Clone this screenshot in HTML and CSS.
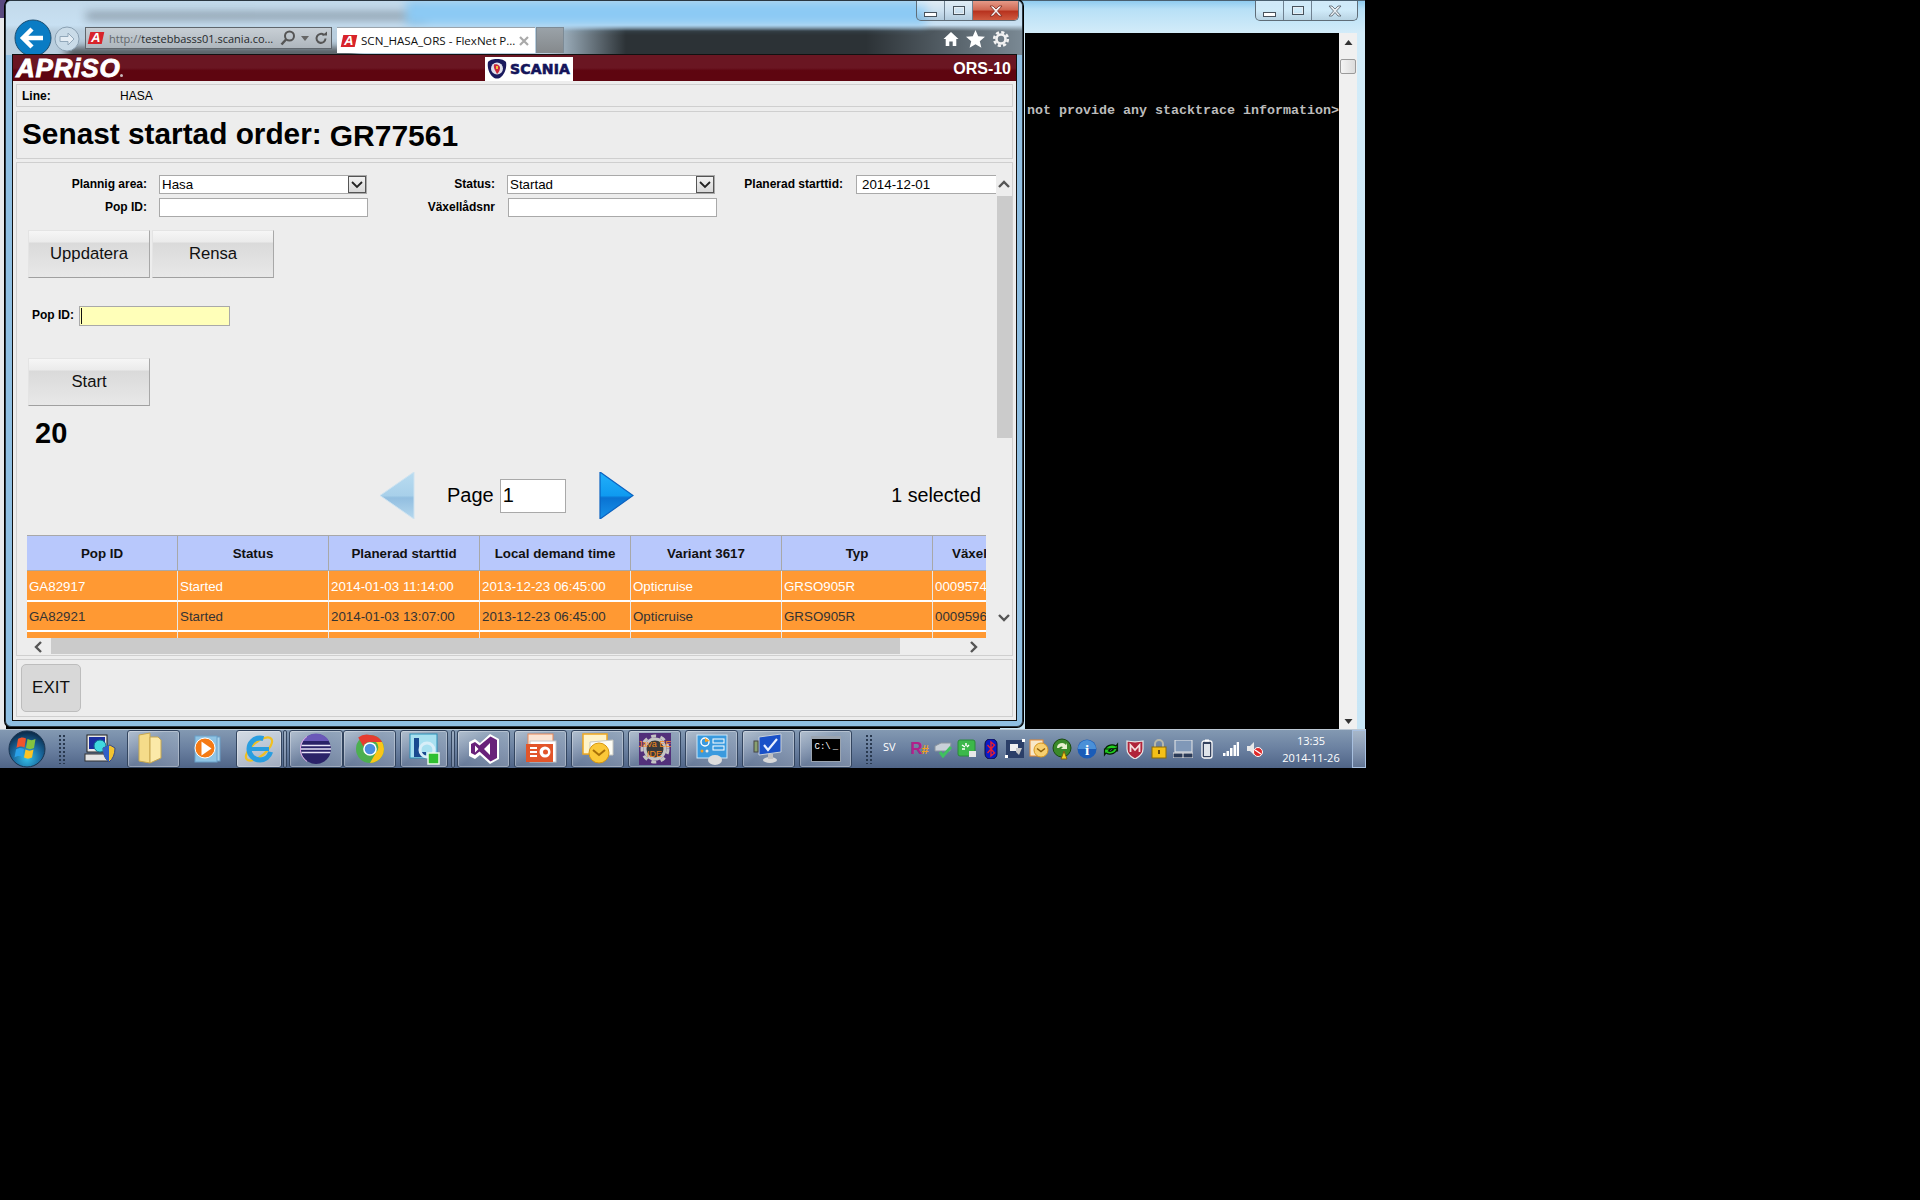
FILE: index.html
```html
<!DOCTYPE html>
<html>
<head>
  <title>SCN_HASA_ORS - FlexNet Production</title>
  <meta name="viewport" content="width=device-width, initial-scale=1.0">
  <link rel="stylesheet" href="styles.css">
</head>
<body>

  <div class="desktop">

    <div class="behind"><div class="behind-chip"></div></div>

    <!-- Console window -->
    <div class="console">
      <div class="win-buttons console-buttons">
        <div class="wb wb-min"><i class="glyph-min"></i></div>
        <div class="wb wb-max"><i class="glyph-max"></i></div>
        <div class="wb wb-x">
          <svg width="16" height="12" viewBox="0 0 16 12"><path d="M2 1h3l3 3 3-3h3l-4.500 5 4.500 5h-3l-3-3.500-3 3.500h-3l4.500-5z" fill="#e8eef2" stroke="#56606a" stroke-width=".8"/></svg>
        </div>
      </div>
      <div class="console-body">
        <div class="console-screen">
          <div class="console-line">not provide any stacktrace information&gt;</div>
        </div>
        <div class="console-scroll">
          <svg class="console-up" width="9" height="5" viewBox="0 0 9 5"><path d="M4.500 0l4 5h-8z" fill="#333"/></svg>
          <div class="console-thumb"></div>
          <svg class="console-down" width="9" height="5" viewBox="0 0 9 5"><path d="M4.500 5l4-5h-8z" fill="#333"/></svg>
        </div>
      </div>
    </div>

    <!-- Browser window -->
    <div class="browser">
      <div class="glass">
        <div class="smudge smudge-a"></div>
        <div class="smudge smudge-b"></div>
        <div class="smudge smudge-c"></div>

        <div class="win-buttons">
          <div class="wb wb-min"><i class="glyph-min"></i></div>
          <div class="wb wb-max"><i class="glyph-max"></i></div>
          <div class="wb wb-close">
            <svg width="16" height="12" viewBox="0 0 16 12"><path d="M2 1h3l3 3 3-3h3l-4.500 5 4.500 5h-3l-3-3.500-3 3.500h-3l4.500-5z" fill="#f4eeee" stroke="#7a2a20" stroke-width=".8"/></svg>
          </div>
        </div>

        <div class="navbar">
          <div class="nav-back">
            <svg width="38" height="38" viewBox="0 0 38 38">
              <circle cx="19" cy="19" r="18" fill="#0a7cc4" stroke="#1d4f72" stroke-width="1"/>
              <path d="M9 19h20M18 10l-9 9 9 9" fill="none" stroke="#fff" stroke-width="4.500"/>
            </svg>
          </div>
          <div class="nav-forward">
            <svg width="26" height="26" viewBox="0 0 26 26">
              <circle cx="13" cy="13" r="12" fill="#c9dbe8" stroke="#8aa0b2" stroke-width="1"/>
              <path d="M20 13l-6-6v3.500h-8v5h8v3.500z" fill="#e4edf4" stroke="#92a8ba" stroke-width="1"/>
            </svg>
          </div>
          <div class="address">
            <span class="favicon">A</span>
            <span class="url"><span class="url-scheme">http://</span>testebbasss01.scania.co...</span>
            <svg class="addr-icon" width="16" height="16" viewBox="0 0 16 16"><circle cx="9.500" cy="6" r="4.500" fill="none" stroke="#555" stroke-width="2"/><path d="M6 9.500l-4.500 5" stroke="#555" stroke-width="2.500"/></svg>
            <svg class="addr-drop" width="8" height="5" viewBox="0 0 8 5"><path d="M0 0h8l-4 5z" fill="#666"/></svg>
            <svg class="addr-icon" width="14" height="14" viewBox="0 0 14 14"><path d="M11.500 7.500a4.500 4.500 0 1 1-1.500-3.500" fill="none" stroke="#555" stroke-width="2"/><path d="M8 4.500h5v-4z" fill="#555"/></svg>
          </div>
          <div class="tab">
            <span class="favicon">A</span>
            <span class="tab-title">SCN_HASA_ORS - FlexNet P...</span>
            <svg class="tab-close" width="10" height="10" viewBox="0 0 10 10"><path d="M1 1l8 8M9 1l-8 8" stroke="#a9a9a9" stroke-width="2.200"/></svg>
          </div>
          <div class="tab-new"></div>
          <div class="tools">
            <svg width="16" height="16" viewBox="0 0 16 16"><path d="M8 1l7.500 7h-2.200v7h-3.600v-4.500h-3.400v4.500h-3.600v-7h-2.200z" fill="#fff"/></svg>
            <svg width="19" height="18" viewBox="0 0 19 18"><path d="M9.500 0l2.700 6.200 6.800.6-5.200 4.400 1.600 6.600-5.900-3.500-5.900 3.500 1.600-6.600-5.200-4.400 6.800-.6z" fill="#fff"/></svg>
            <svg width="18" height="18" viewBox="0 0 18 18"><circle cx="9" cy="9" r="4.500" fill="none" stroke="#f2f2f2" stroke-width="2.600"/><circle cx="9" cy="9" r="6.800" fill="none" stroke="#f2f2f2" stroke-width="2.600" stroke-dasharray="3.200 2.140"/></svg>
          </div>
        </div>
      </div>

      <div class="page">
        <div class="app-header">
          <div class="apriso">APRiSO<i class="apriso-mark"></i></div>
          <div class="scania">
            <svg width="20" height="20" viewBox="0 0 20 20">
              <path d="M1 3c2-2 4-3 9-3s7 1 9 3c1 5-1 12-5 15-2 2-6 2-8 0-4-3-6-10-5-15z" fill="#1a1a5e"/>
              <circle cx="10" cy="9.500" r="6" fill="#dfe0ec"/>
              <path d="M7 5.500c3-1 6.500 1 6 4s-1.500 4-3 5.500c-1-2.500-4-6-3-9.500z" fill="#c9283a"/>
              <path d="M9 7h2v3h-2z" fill="#f2c040"/>
            </svg>
            <span class="scania-name">SCANIA</span>
          </div>
          <div class="station">ORS-10</div>
        </div>

        <div class="panel line-panel">
          <span class="line-label">Line:</span>
          <span>HASA</span>
        </div>

        <div class="panel title-panel">
          <h1>Senast startad order:</h1>
          <div class="order-no">GR77561</div>
        </div>

        <div class="panel form-panel">
          <div class="form-content">
            <div class="filters">
              <label>Plannig area:</label>
              <div class="combo"><span>Hasa</span><i class="combo-arrow"><svg width="12" height="8" viewBox="0 0 12 8"><path d="M1 1l5 5 5-5" fill="none" stroke="#222" stroke-width="1.800"/></svg></i></div>
              <label>Status:</label>
              <div class="combo"><span>Startad</span><i class="combo-arrow"><svg width="12" height="8" viewBox="0 0 12 8"><path d="M1 1l5 5 5-5" fill="none" stroke="#222" stroke-width="1.800"/></svg></i></div>
              <label>Planerad starttid:</label>
              <input class="field field-date" type="text" value="2014-12-01">
              <label>Pop ID:</label>
              <input class="field field-long" type="text">
              <label>Växellådsnr</label>
              <input class="field field-long field-shift" type="text">
            </div>

            <div class="button-row">
              <button class="big-btn">Uppdatera</button>
              <button class="big-btn">Rensa</button>
            </div>

            <div class="scan-row">
              <label>Pop ID:</label>
              <div class="scan-input"><i class="caret"></i></div>
            </div>

            <button class="big-btn start-btn">Start</button>
            <div class="count">20</div>

            <div class="pager">
              <svg class="pager-prev" width="35" height="47" viewBox="0 0 35 47">
                <defs><linearGradient id="prevFill" x1="0" y1="0" x2="0" y2="1"><stop offset="0" stop-color="#b9dcf0"/><stop offset=".5" stop-color="#a8d0ea"/><stop offset=".55" stop-color="#92bee0"/><stop offset="1" stop-color="#b5d8ee"/></linearGradient></defs>
                <path d="M34 0v47l-34-23.500z" fill="url(#prevFill)" stroke="#cfe3f0" stroke-width="1"/>
              </svg>
              <span class="page-label">Page</span>
              <input class="page-input" type="text" value="1">
              <svg class="pager-next" width="35" height="47" viewBox="0 0 35 47">
                <defs><linearGradient id="nextFill" x1="0" y1="0" x2="0" y2="1"><stop offset="0" stop-color="#22b0fa"/><stop offset=".5" stop-color="#0f9af0"/><stop offset=".55" stop-color="#0a72d2"/><stop offset="1" stop-color="#1793ea"/></linearGradient></defs>
                <path d="M1 0v47l33-23.500z" fill="url(#nextFill)" stroke="#0b62c0" stroke-width="1.200"/>
              </svg>
              <span class="selected">1 selected</span>
            </div>

            <div class="grid-wrap">
              <table class="grid">
                <thead>
                  <tr>
                    <th>Pop ID</th>
                    <th>Status</th>
                    <th>Planerad starttid</th>
                    <th>Local demand time</th>
                    <th>Variant 3617</th>
                    <th>Typ</th>
                    <th class="th-cut">Växel</th>
                  </tr>
                </thead>
                <tbody>
                  <tr class="row-active">
                    <td>GA82917</td><td>Started</td><td>2014-01-03 11:14:00</td><td>2013-12-23 06:45:00</td><td>Opticruise</td><td>GRSO905R</td><td>0009574</td>
                  </tr>
                  <tr class="row-short">
                    <td>GA82921</td><td>Started</td><td>2014-01-03 13:07:00</td><td>2013-12-23 06:45:00</td><td>Opticruise</td><td>GRSO905R</td><td>0009596</td>
                  </tr>
                  <tr>
                    <td></td><td></td><td></td><td></td><td></td><td></td><td></td>
                  </tr>
                </tbody>
              </table>
            </div>

            <div class="hscroll">
              <svg width="10" height="12" viewBox="0 0 10 12"><path d="M8 1l-5 5 5 5" fill="none" stroke="#555" stroke-width="2.400"/></svg>
              <div class="hscroll-thumb"></div>
              <svg width="10" height="12" viewBox="0 0 10 12"><path d="M2 1l5 5-5 5" fill="none" stroke="#555" stroke-width="2.400"/></svg>
            </div>
          </div>

          <div class="vscroll">
            <svg width="12" height="10" viewBox="0 0 12 10"><path d="M1 8l5-5 5 5" fill="none" stroke="#555" stroke-width="2.400"/></svg>
            <div class="vscroll-thumb"></div>
            <svg class="vscroll-down" width="12" height="10" viewBox="0 0 12 10"><path d="M1 2l5 5 5-5" fill="none" stroke="#555" stroke-width="2.400"/></svg>
          </div>
        </div>

        <div class="panel exit-panel">
          <button class="exit-btn">EXIT</button>
        </div>
      </div>
    </div>

    <!-- Taskbar -->
    <div class="taskbar">
      <div class="start">
        <svg width="38" height="38" viewBox="0 0 38 38">
          <defs><radialGradient id="orb" cx=".5" cy=".75" r=".7"><stop offset="0" stop-color="#34c0e8"/><stop offset=".55" stop-color="#1a6aa0"/><stop offset="1" stop-color="#0c2f50"/></radialGradient></defs>
          <circle cx="19" cy="19" r="18" fill="url(#orb)" stroke="#1a3450" stroke-width="1"/>
          <path d="M10 9c3-2 5-2 8-.5l-1.500 9c-3-1.500-5-1.500-8 .5z" fill="#f0542c"/>
          <path d="M19.500 9c3 1.500 5 1.500 8 0l-1.500 9c-3 1.500-5 1.500-8 0z" fill="#84c340"/>
          <path d="M8 19.500c3-2 5-2 8-.5l-1.500 8c-3-1.500-5-1.500-8 .5z" fill="#2aa0e8"/>
          <path d="M17.500 19.500c3 1.500 5 1.500 8 0l-1.500 8c-3 1.500-5 1.500-8 0z" fill="#fcc424"/>
        </svg>
      </div>
      <div class="grip"></div>

      <div class="task task-plain task-first">
        <svg width="32" height="32" viewBox="0 0 32 32">
          <rect x="3" y="2" width="20" height="17" fill="#e8e8e8" stroke="#222"/>
          <rect x="5" y="4" width="16" height="12" fill="#1b2fa0"/>
          <rect x="1" y="21" width="24" height="7" fill="#e4e4e4" stroke="#333"/>
          <circle cx="16" cy="13" r="6" fill="#40d8e0" stroke="#107090"/>
          <path d="M19 15l7-3 5 3c0 6-2 11-6 14-4-3-6-8-6-14z" fill="#f4c430" stroke="#3a4a80"/>
          <path d="M25 12v17c-4-3-6-8-6-14z" fill="#3060c8"/>
        </svg>
      </div>
      <div class="task task-btn task-folder">
        <svg width="26" height="34" viewBox="0 0 26 34">
          <path d="M2 3l11-2v30l-11-2z" fill="#f5dc8a" stroke="#c8a850"/>
          <path d="M13 5h8l3 3v18l-11 5z" fill="#fbe9a8" stroke="#c8a850"/>
        </svg>
      </div>
      <div class="task task-plain task-media">
        <svg width="30" height="28" viewBox="0 0 30 28">
          <rect x="7" y="2" width="22" height="24" fill="#a9d2ea" stroke="#6aa0c8"/>
          <rect x="4" y="1" width="22" height="26" fill="#8fc4e4" stroke="#6aa0c8"/>
          <circle cx="14" cy="13" r="10" fill="#f57a14" stroke="#fff" stroke-width="1"/>
          <path d="M10.500 6.500l10 7-10 7z" fill="#fff"/>
        </svg>
      </div>
      <div class="task task-btn task-ie">
        <svg width="32" height="32" viewBox="0 0 32 32">
          <ellipse cx="16" cy="16" rx="16" ry="7" transform="rotate(-40 16 16)" fill="none" stroke="#f0c020" stroke-width="2.200"/>
          <circle cx="17" cy="16" r="11" fill="none" stroke="#2a9ee0" stroke-width="5" stroke-dasharray="52 17" stroke-dashoffset="-3"/>
          <path d="M8 16h18" stroke="#2a9ee0" stroke-width="4"/>
        </svg>
      </div>
      <div class="task-sep"></div>
      <div class="task task-btn task-eclipse">
        <svg width="32" height="32" viewBox="0 0 32 32">
          <circle cx="16" cy="16" r="15" fill="#2a2268"/>
          <path d="M3 8a15 15 0 0 1 26 0z" fill="#6a58b8"/>
          <path d="M1.500 12.500h29M1 16h30M1.500 19.500h29" stroke="#e8e4f8" stroke-width="1.400"/>
          <path d="M7 3.500a15 15 0 0 0 0 25" fill="none" stroke="#e0a8e8" stroke-width="1"/>
        </svg>
      </div>
      <div class="task task-btn task-chrome">
        <svg width="30" height="30" viewBox="0 0 30 30">
          <circle cx="15" cy="15" r="14" fill="#4caf50"/>
          <path d="M15 1a14 14 0 0 1 12.100 7h-12.100a7 7 0 0 0-6.600 4.500l-5.200-8.900a14 14 0 0 1 11.800-2.600z" fill="#e53c30"/>
          <path d="M27.100 8a14 14 0 0 1-12.100 21l6-10.500a7 7 0 0 0 0-10.500z" fill="#fbc518"/>
          <circle cx="15" cy="15" r="6.800" fill="#fff"/>
          <circle cx="15" cy="15" r="5.300" fill="#4a8ee0"/>
        </svg>
      </div>
      <div class="task task-btn task-lync">
        <svg width="32" height="32" viewBox="0 0 32 32">
          <rect x="2" y="1" width="27" height="24" fill="#a8e0f0" stroke="#2a90b8"/>
          <path d="M6 5h5v14h7v5h-12z" fill="#1a4a90"/>
          <circle cx="19" cy="17" r="7" fill="none" stroke="#d8eef8" stroke-width="3"/>
          <rect x="20" y="20" width="11" height="11" fill="#30c030" stroke="#e8f8e8" stroke-width="1.500"/>
        </svg>
      </div>
      <div class="task-sep"></div>
      <div class="task task-btn task-vs">
        <svg width="32" height="32" viewBox="0 0 32 32">
          <path d="M22 1l9 5v20l-9 5-10-9-5 4-6-3v-14l6-3 5 4z" fill="#fff"/>
          <path d="M22.500 3.500l6.500 3.500v18l-6.500 3.500-11-10-4.500 3.500-4-2v-9l4-2 4.500 3.500z" fill="#68217a"/>
          <path d="M7 12.500v7l3.500-3.500zM22 10l-6 6 6 6z" fill="#fff"/>
        </svg>
      </div>
      <div class="task task-btn task-ppt">
        <svg width="32" height="32" viewBox="0 0 32 32">
          <rect x="3" y="1" width="25" height="25" fill="#fbe4d4" stroke="#e88858"/>
          <rect x="5" y="8" width="26" height="21" fill="#fff" stroke="#c8c8c8"/>
          <rect x="1" y="11" width="27" height="18" fill="#e2552a"/>
          <path d="M5 15h7M5 19h7M5 23h7" stroke="#fff" stroke-width="2"/>
          <circle cx="20" cy="19" r="5.500" fill="#fff"/>
          <circle cx="20.500" cy="19" r="2.500" fill="#e2552a"/>
        </svg>
      </div>
      <div class="task task-btn task-outlook">
        <svg width="32" height="32" viewBox="0 0 32 32">
          <rect x="1" y="1" width="24" height="20" fill="#fff3c8" stroke="#f0a820" stroke-width="1.500"/>
          <path d="M8 9l23-2v15h-23z" fill="#fcfcf4" stroke="#c8c8c0"/>
          <circle cx="17" cy="20" r="10" fill="#fbc838" stroke="#d89810"/>
          <path d="M11 17l6 5 6-5" fill="none" stroke="#a87008" stroke-width="2"/>
        </svg>
      </div>
      <div class="task task-btn task-java">
        <div class="java-tile">
          <svg class="java-gear" width="30" height="30" viewBox="0 0 30 30"><circle cx="15" cy="15" r="10" fill="#3a3a3a" stroke="#c4c4c4" stroke-width="3"/><circle cx="15" cy="15" r="13" fill="none" stroke="#c4c4c4" stroke-width="3" stroke-dasharray="5 4.500"/></svg>
          <span class="java-text">Java EE<br>IDE</span>
        </div>
      </div>
      <div class="task task-btn task-panel">
        <svg width="32" height="32" viewBox="0 0 32 32">
          <rect x="1" y="2" width="30" height="23" fill="#3a9ade" stroke="#d0e8f8"/>
          <circle cx="9" cy="9" r="4" fill="none" stroke="#fff" stroke-width="1.400"/>
          <path d="M9 5l5 3-5 1z" fill="#f8a020"/>
          <rect x="17" y="6" width="11" height="4" fill="none" stroke="#fff"/>
          <rect x="17" y="13" width="11" height="4" fill="none" stroke="#fff"/>
          <circle cx="6" cy="18" r="1.500" fill="#f8a020"/>
          <circle cx="11" cy="18" r="1.500" fill="#e8e8e8"/>
          <ellipse cx="19" cy="27" rx="7" ry="5" fill="#dcdcdc"/>
        </svg>
      </div>
      <div class="task task-btn task-net">
        <svg width="32" height="32" viewBox="0 0 32 32">
          <path d="M6 4l22-3v18l-22 3z" fill="#1850c8" stroke="#c8d0d8"/>
          <path d="M11 12l4 5 9-11" fill="none" stroke="#e8f0ff" stroke-width="2.200"/>
          <rect x="1" y="8" width="4" height="11" fill="#88a070" stroke="#444"/>
          <ellipse cx="17" cy="27" rx="7" ry="3" fill="#d8d8d8"/>
          <path d="M15 21h5v5h-5z" fill="#c0c0c0"/>
        </svg>
      </div>
      <div class="task task-btn task-cmd">
        <div class="cmd-tile">C:\<span class="cmd-cursor">_</span></div>
      </div>

      <div class="grip grip-tray"></div>
      <div class="lang">SV</div>

      <div class="tray">
        <span class="t-rs"><b>R</b><i>#</i></span>
        <svg width="20" height="20" viewBox="0 0 20 20"><path d="M2 7l6-3h10l-1 8h-15z" fill="#c8d0d8" stroke="#8a949e"/><path d="M7 13l3 4 8-9" fill="none" stroke="#40c060" stroke-width="3"/></svg>
        <svg width="20" height="20" viewBox="0 0 20 20"><rect x="1" y="1" width="17" height="16" rx="2" fill="#3cb84a" stroke="#2a8a3a"/><path d="M5 6l3 2M9 4v3M12 6l-2 2M5 10h3" stroke="#fff" stroke-width="1.500"/><rect x="12" y="12" width="7" height="6" fill="#e8e8e8"/></svg>
        <svg width="14" height="20" viewBox="0 0 14 20"><rect x="1" y="0" width="12" height="20" rx="5" fill="#0a1ac8" stroke="#101040"/><path d="M3.500 6l7 8-3.500 3v-14l3.500 3-7 8" fill="none" stroke="#e82030" stroke-width="1.400"/></svg>
        <svg width="20" height="20" viewBox="0 0 20 20"><rect x="1" y="1" width="18" height="18" fill="#2a3e68"/><rect x="5" y="5" width="8" height="7" fill="#f0f0f0"/><path d="M11 9h6l-3 7-3-3z" fill="#c8c8c8"/><rect x="0" y="16" width="3" height="3" fill="#fff"/><rect x="17" y="0" width="3" height="3" fill="#fff"/></svg>
        <svg width="20" height="20" viewBox="0 0 20 20"><rect x="1" y="1" width="13" height="16" fill="#f8e8c8" stroke="#e88a30"/><circle cx="12" cy="11" r="7" fill="#f8d070" stroke="#d89820"/><path d="M8 9.500l4 3 4-3" fill="none" stroke="#906008" stroke-width="1.400"/></svg>
        <svg width="22" height="22" viewBox="0 0 22 22"><circle cx="10" cy="10" r="9" fill="#3a8a2a" stroke="#1a4a10"/><path d="M5 10a5 5 0 0 1 9-3l1-2v6h-6l2-2a3 3 0 0 0-4 1z" fill="#e8f0d0"/><path d="M15 21l-6 0 3-8z" fill="#f0d020" stroke="#806010"/></svg>
        <svg width="20" height="20" viewBox="0 0 20 20"><circle cx="10" cy="10" r="9.500" fill="#1a5cb8"/><path d="M1 10a9 9 0 0 1 18 0" fill="#4a90d8"/><text x="10" y="15.500" class="t-info">i</text></svg>
        <svg width="22" height="20" viewBox="0 0 22 20"><path d="M5 12a7 6 0 0 1 11-5l1.500-2v7h-6l2-2a3.500 3 0 0 0-5 2z" fill="#20d020" stroke="#052005" stroke-width="1.200"/><path d="M17 9a7 6 0 0 1-11 5l-1.500 2v-6h6l-2 2a3.500 3 0 0 0 5-2z" fill="#20d020" stroke="#052005" stroke-width="1.200"/></svg>
        <svg width="18" height="20" viewBox="0 0 18 20"><path d="M1 2c5 1 11 1 16 0v8c0 5-4 8-8 10-4-2-8-5-8-10z" fill="#b0243a" stroke="#e8e8e8" stroke-width="1.200"/><path d="M4.500 13v-7l4.500 5 4.500-5v7" fill="none" stroke="#f4e0e0" stroke-width="1.800"/></svg>
        <svg width="16" height="20" viewBox="0 0 16 20"><path d="M4 9v-4a4 4 0 0 1 8 0v4" fill="none" stroke="#b8b8a8" stroke-width="2"/><rect x="1" y="8" width="14" height="11" fill="#f4c018" stroke="#8a6a08"/><rect x="7" y="11" width="2" height="4" fill="#6a4a08"/></svg>
        <svg width="20" height="18" viewBox="0 0 20 18"><rect x="2" y="0" width="17" height="12" fill="#8098b8" stroke="#e8e8e8"/><rect x="0" y="13" width="20" height="5" fill="#2a3a58" stroke="#e8e8e8"/><path d="M10 13v5" stroke="#e8e8e8"/></svg>
        <svg width="12" height="20" viewBox="0 0 12 20"><rect x="1" y="2" width="10" height="17" rx="2" fill="#34425e" stroke="#fff" stroke-width="1.300"/><rect x="4" y="0.500" width="4" height="2" fill="#fff"/><rect x="3" y="5" width="6" height="12" fill="#dfe4ea"/></svg>
        <svg width="16" height="14" viewBox="0 0 16 14"><path d="M0 11h2.500v3h-2.500zM3.500 9h2.500v5h-2.500zM7 6h2.500v8h-2.500zM10.500 3h2.500v11h-2.500zM13.700 0h2.300v14h-2.300z" fill="#fff"/></svg>
        <svg width="16" height="16" viewBox="0 0 16 16"><path d="M0 5h3l4-4v13l-4-4h-3z" fill="#e8e8e8"/><circle cx="11" cy="11" r="4.500" fill="#e02828" stroke="#fff"/><path d="M8 9l6 4" stroke="#fff" stroke-width="1.400"/></svg>
      </div>

      <div class="clock">
        <div>13:35</div>
        <div>2014-11-26</div>
      </div>
      <div class="show-desktop"></div>
    </div>
  </div>

</body>
</html>
```

FILE: styles.css
```css
html, body {
  margin: 0;
  background: #000;
}

body {
  font-family: 'Liberation Sans', sans-serif;
  color: #000;
}

.desktop {
  position: relative;
  width: 1920px;
  height: 1200px;
  background: #000;
  overflow: hidden;
}

.behind {
  position: absolute;
  left: 0;
  top: 0;
  width: 6px;
  height: 729px;
  background: #e9eaec;
}

.behind-chip {
  width: 6px;
  height: 18px;
  background: #5a4a80;
}

/* console window */

.console {
  position: absolute;
  left: 1000px;
  top: 0;
  width: 365px;
  height: 729px;
  padding-top: 32px;
  box-sizing: border-box;
  background: linear-gradient(#8fcbef, #b7e0f6 8px, #d3ecf9 32px, #c8e6f6);
  border-top: 1px solid #4a6070;
}

.console-body {
  display: flex;
  height: 696px;
  margin-left: 25px;
  margin-right: 8px;
}

.console-screen {
  flex: 1;
  background: #000;
  padding-top: 71px;
  box-sizing: border-box;
}

.console-line {
  color: #bcbcbc;
  font-family: 'Liberation Mono', monospace;
  font-weight: bold;
  font-size: 13.33px;
  line-height: 14px;
  padding-left: 2px;
  white-space: nowrap;
}

.console-scroll {
  width: 18px;
  background: #f0f0f0;
  display: flex;
  flex-direction: column;
  align-items: center;
  padding-top: 7px;
  box-sizing: border-box;
}

.console-thumb {
  width: 16px;
  height: 15px;
  margin-top: 14px;
  background: linear-gradient(90deg, #f4f4f4, #dcdcdc);
  border: 1px solid #9a9a9a;
  border-radius: 2px;
  box-sizing: border-box;
}

.console-down {
  margin-top: auto;
  margin-bottom: 5px;
}

/* window caption buttons */

.win-buttons {
  position: absolute;
  top: 0;
  left: 910px;
  width: 103px;
  height: 20px;
  display: flex;
  border: 1px solid #5f6d78;
  border-top: none;
  border-radius: 0 0 5px 5px;
  box-sizing: border-box;
  overflow: hidden;
  z-index: 2;
}

.console-buttons {
  left: 255px;
  z-index: 2;
  background: rgba(255, 255, 255, .2);
}

.wb {
  display: flex;
  align-items: center;
  justify-content: center;
  width: 28px;
  height: 19px;
  box-sizing: border-box;
  border-right: 1px solid #6f8190;
  background: linear-gradient(rgba(255, 255, 255, .5), rgba(255, 255, 255, .15) 50%, rgba(90, 120, 140, .2));
}

.wb-close {
  flex: 1;
  border-right: none;
  background: linear-gradient(#e59a88, #d06a55 45%, #b8331f 55%, #cf5a40);
}

.wb-x {
  flex: 1;
  border-right: none;
}

.glyph-min {
  display: block;
  width: 11px;
  height: 3px;
  margin-top: 7px;
  background: #fff;
  border: 1px solid #47525c;
}

.glyph-max {
  display: block;
  width: 10px;
  height: 7px;
  border: 1px solid #47525c;
  outline: 1px solid #e6eef4;
  outline-offset: -2px;
}

/* browser window */

.browser {
  position: absolute;
  left: 5px;
  top: 0;
  width: 1018px;
  height: 727px;
  background: #8fbfe2;
  border: 1px solid #2a3640;
  border-radius: 6px 6px 6px 6px;
  box-sizing: border-box;
  box-shadow: 0 0 0 1px #000;
}

.glass {
  position: relative;
  height: 54px;
  overflow: hidden;
  border-radius: 5px 5px 0 0;
  background:
    linear-gradient(#c2d9ea 0, #c8e0f2 24px, rgba(120, 140, 155, 0) 30px),
    linear-gradient(90deg, #b9cede 0, #b9cede 540px, #2c3236 620px, #2c3236 860px, #7b8a95 1018px);
}

.smudge {
  position: absolute;
  filter: blur(5px);
}

.smudge-a {
  left: 80px;
  top: 11px;
  width: 340px;
  height: 8px;
  background: #57626e;
  opacity: .55;
}

.smudge-b {
  left: 400px;
  top: 0;
  width: 520px;
  height: 24px;
  background: #8ccaf4;
}

.smudge-c {
  left: 60px;
  top: 48px;
  width: 290px;
  height: 8px;
  background: #222;
}

.navbar {
  position: absolute;
  left: 0;
  top: 18px;
  right: 0;
  height: 36px;
  display: flex;
  align-items: flex-start;
}

.nav-back {
  margin-left: 8px;
  height: 38px;
  display: flex;
}

.nav-forward {
  margin-left: 2px;
  margin-top: 7px;
  display: flex;
}

.address {
  display: flex;
  align-items: center;
  width: 247px;
  height: 22px;
  margin-left: 5px;
  margin-top: 8px;
  padding-left: 3px;
  box-sizing: border-box;
  background: linear-gradient(#c8cfd5, #aeb6bd);
  border: 1px solid #5f666c;
  gap: 5px;
}

.favicon {
  display: inline-block;
  width: 14px;
  height: 12px;
  line-height: 12px;
  text-align: center;
  background: #d8232a;
  color: #fff;
  font-weight: bold;
  font-size: 13px;
  transform: skewX(-12deg);
  flex: none;
}

.url {
  font-family: 'Open Sans', sans-serif;
  font-size: 11px;
  color: #25282b;
  white-space: nowrap;
  width: 166px;
  margin-left: 1px;
  overflow: hidden;
}

.url-scheme {
  color: #62676b;
}

.addr-icon {
  flex: none;
}

.addr-drop {
  flex: none;
}

.tab {
  display: flex;
  align-items: center;
  width: 198px;
  height: 26px;
  margin-left: 5px;
  margin-top: 8px;
  padding-left: 5px;
  box-sizing: border-box;
  background: #fff;
  border-top: 1px solid #9aa4ac;
}

.tab-title {
  font-family: 'Open Sans', sans-serif;
  font-size: 11.6px;
  color: #111;
  margin-left: 5px;
  width: 155px;
  white-space: nowrap;
  overflow: hidden;
}

.tab-close {
  margin-left: 3px;
  flex: none;
}

.tab-new {
  width: 28px;
  height: 26px;
  margin-top: 8px;
  margin-left: 1px;
  background: linear-gradient(#9aa2a8, #85898c);
  border: 1px solid #7d8b96;
  border-bottom: none;
  box-sizing: border-box;
}

.tools {
  display: flex;
  align-items: center;
  margin-left: auto;
  margin-top: 11px;
  margin-right: 12px;
  gap: 7px;
}

/* page */

.page {
  position: absolute;
  left: 6px;
  top: 53px;
  width: 1005px;
  height: 667px;
  padding: 0 3px;
  box-sizing: border-box;
  background: #ededed;
  border: 1px solid #111;
  border-top-width: 1px;
}

.app-header {
  display: flex;
  align-items: stretch;
  height: 26px;
  margin: 0 -3px 3px;
  background: linear-gradient(#6a1622 0, #6a1622 50%, #5e0510 60%, #5e0510);
  color: #fff;
}

.apriso {
  display: flex;
  align-items: flex-end;
  width: 472px;
  padding-left: 3px;
  font-size: 26px;
  line-height: 25px;
  font-weight: bold;
  font-style: italic;
  letter-spacing: .8px;
  -webkit-text-stroke: .9px #fff;
  box-sizing: border-box;
}

.apriso-mark {
  display: block;
  width: 3px;
  height: 3px;
  margin-bottom: 4px;
  border-radius: 50%;
  background: #c9b9bb;
}

.scania {
  display: flex;
  align-items: center;
  width: 88px;
  height: 24px;
  margin-top: 2px;
  padding-left: 2px;
  gap: 3px;
  background: #fff;
  box-sizing: border-box;
}

.scania-name {
  font-family: 'DejaVu Sans', sans-serif;
  font-size: 14px;
  font-weight: bold;
  letter-spacing: .2px;
  color: #14145a;
  -webkit-text-stroke: .6px #14145a;
}

.station {
  margin-left: auto;
  padding-right: 5px;
  font-size: 16px;
  line-height: 27px;
  font-weight: bold;
}

.panel {
  border: 1px solid #cfcfcf;
  box-sizing: border-box;
}

.line-panel {
  display: flex;
  align-items: center;
  height: 23px;
  margin-bottom: 4px;
  padding-left: 5px;
  font-size: 12px;
}

.line-label {
  width: 98px;
  font-weight: bold;
}

.title-panel {
  display: flex;
  align-items: center;
  height: 48px;
  margin-bottom: 3px;
  padding-left: 5px;
}

h1 {
  margin: -3px 8px 0 0;
  font-size: 29.800px;
  font-weight: bold;
}

.order-no {
  font-size: 30px;
  font-weight: bold;
  margin-top: 1px;
}

.form-panel {
  display: flex;
  height: 494px;
  margin-bottom: 3px;
}

.form-content {
  width: 979px;
  padding: 12px 0 0 12px;
  box-sizing: border-box;
  overflow: hidden;
}

.filters {
  display: grid;
  grid-template-columns: 130px 208px 116px 208px 116px 170px;
  grid-auto-rows: 19px;
  column-gap: 12px;
  row-gap: 4px;
  margin-left: -12px;
  align-items: center;
}

.filters label {
  text-align: right;
  font-size: 12px;
  font-weight: bold;
  margin-top: -2px;
}

.combo {
  display: flex;
  align-items: center;
  justify-content: space-between;
  height: 19px;
  padding-left: 2px;
  background: #fff;
  border: 1px solid #a9a9a9;
  box-sizing: border-box;
  font-size: 13.33px;
}

.combo-arrow {
  display: flex;
  align-items: center;
  justify-content: center;
  width: 18px;
  height: 17px;
  background: linear-gradient(#f2f2f2, #d8d8d8);
  border: 1px solid #555;
  box-sizing: border-box;
}

.field {
  width: 100%;
  height: 19px;
  padding: 0 2px;
  margin: 0;
  background: #fff;
  border: 1px solid #a9a9a9;
  box-sizing: border-box;
  font-family: inherit;
  font-size: 13.33px;
}

.field-date {
  margin-left: 1px;
  padding-left: 5px;
}

.field-long {
  width: 209px;
}

.field-shift {
  margin-left: 1px;
}

.button-row {
  display: flex;
  gap: 2px;
  margin-top: 13px;
  margin-left: -1px;
}

.big-btn {
  display: block;
  width: 122px;
  height: 48px;
  padding: 0 0 1px;
  background: linear-gradient(#f6f6f6 0, #ebebeb 11px, #dadada 12px, #e8e8e8 100%);
  border: 1px solid #e4e4e4;
  border-right-color: #a8a8a8;
  border-bottom: 1px solid #a0a0a0;
  box-sizing: border-box;
  font-family: inherit;
  font-size: 16.700px;
  color: #111;
}

.scan-row {
  display: flex;
  align-items: center;
  height: 20px;
  margin-top: 28px;
  margin-left: 3px;
}

.scan-row label {
  width: 47px;
  font-size: 12px;
  font-weight: bold;
  margin-top: -3px;
}

.scan-input {
  display: flex;
  align-items: center;
  width: 151px;
  height: 20px;
  padding-left: 1px;
  background: #ffffb9;
  border: 1px solid #a9a9a9;
  box-sizing: border-box;
}

.caret {
  display: block;
  width: 1px;
  height: 16px;
  background: #111;
}

.start-btn {
  margin-top: 32px;
  margin-left: -1px;
}

.count {
  margin-top: 11px;
  margin-left: 6px;
  font-size: 29px;
  line-height: 32px;
  font-weight: bold;
}

.pager {
  display: flex;
  align-items: center;
  height: 47px;
  margin-top: 23px;
}

.pager-prev {
  margin-left: 351px;
  flex: none;
}

.page-label {
  margin-left: 32px;
  font-size: 20px;
}

.page-input {
  width: 66px;
  height: 34px;
  margin: 0 0 0 6px;
  padding: 0 2px;
  background: #fff;
  border: 1px solid #a9a9a9;
  box-sizing: border-box;
  font-family: inherit;
  font-size: 20px;
}

.pager-next {
  margin-left: 33px;
  flex: none;
}

.selected {
  margin-left: auto;
  margin-right: 15px;
  font-size: 19.700px;
}

.grid-wrap {
  width: 959px;
  height: 103px;
  margin-top: 16px;
  margin-left: -2px;
  overflow: hidden;
}

.grid {
  width: 1057px;
  table-layout: fixed;
  border-collapse: separate;
  border-spacing: 0;
  font-size: 13.33px;
}

.grid th {
  height: 36px;
  padding: 0;
  background: #b8c8fc;
  border-top: 1px solid #a8a8a8;
  border-right: 1px solid #a8a8a8;
  border-bottom: 1px solid #a8a8a8;
  box-sizing: border-box;
  font-weight: bold;
  color: #111;
}

.grid .th-cut {
  text-align: left;
  padding-left: 19px;
  border-right: none;
}

.grid td {
  height: 31px;
  padding: 2px 0 0 2px;
  background: #ff9933;
  border-right: 1px solid #e8e8e8;
  border-bottom: 2px solid #fff;
  box-sizing: border-box;
  color: #333;
  white-space: nowrap;
  overflow: hidden;
}

.row-active td {
  color: #fff;
}

.grid .row-short td {
  height: 30px;
  padding-top: 1px;
}

.hscroll {
  display: flex;
  align-items: center;
  height: 16px;
  margin-left: -2px;
  width: 959px;
}

.hscroll svg {
  flex: none;
  margin-left: 6px;
  margin-top: 2px;
}

.hscroll-thumb {
  width: 849px;
  height: 16px;
  margin-left: 8px;
  background: #cbcbcb;
}

.hscroll-thumb + svg {
  margin-left: 69px;
}

.vscroll {
  display: flex;
  flex-direction: column;
  align-items: center;
  flex: 1;
  padding-top: 16px;
}

.vscroll-thumb {
  width: 15px;
  height: 242px;
  margin-top: 7px;
  background: #cbcbcb;
}

.vscroll-down {
  margin-top: 175px;
}

.exit-panel {
  display: flex;
  align-items: center;
  height: 58px;
  padding-left: 4px;
}

.exit-btn {
  width: 60px;
  height: 48px;
  padding: 0;
  background: #d8d8d8;
  border: 1px solid #bdbdbd;
  border-radius: 5px;
  box-sizing: border-box;
  font-family: inherit;
  font-size: 17px;
  color: #111;
}

/* taskbar */

.taskbar {
  position: absolute;
  left: 0;
  top: 729px;
  width: 1366px;
  height: 39px;
  display: flex;
  align-items: center;
  background: linear-gradient(#8399b2, #6a80a0 50%, #4f6487);
  border-top: 1px solid #bcc8d4;
  box-sizing: border-box;
  color: #fff;
}

.start {
  display: flex;
  width: 54px;
  padding-left: 8px;
  box-sizing: border-box;
}

.grip {
  width: 8px;
  height: 30px;
  margin-left: 4px;
  background-image: radial-gradient(circle, #29394f 1px, transparent 1.300px);
  background-size: 4px 4px;
}

.task {
  display: flex;
  align-items: center;
  justify-content: center;
  width: 53px;
  height: 38px;
  margin-right: 1px;
  box-sizing: border-box;
  flex: none;
}

.task-btn {
  border: 1px solid #33455f;
  border-radius: 3px;
  background: linear-gradient(135deg, rgba(255, 255, 255, .38), rgba(255, 255, 255, .12) 45%, rgba(255, 255, 255, .24));
  box-shadow: inset 0 0 0 1px rgba(255, 255, 255, .3);
}

.task-first {
  margin-left: 6px;
  width: 55px;
  margin-right: 0;
}

.task-folder {
  padding-right: 8px;
}

.task-media {
  width: 55px;
  margin-right: 0;
  padding-right: 6px;
}

.task-ie {
  width: 46px;
  margin-right: 0;
  background: linear-gradient(135deg, rgba(255, 255, 255, .65), rgba(255, 255, 255, .45));
}

.task-sep {
  width: 4px;
  height: 38px;
  margin-left: 1px;
  margin-right: 2px;
  flex: none;
  background: rgba(255, 255, 255, .2);
  border: 1px solid #33455f;
  box-sizing: border-box;
  border-radius: 2px;
}

.task-eclipse {
  margin-right: 0;
  width: 54px;
}

.task-chrome {
  margin-right: 4px;
}

.task-lync {
  width: 48px;
  margin-right: 2px;
}

.task-vs,
.task-ppt,
.task-outlook,
.task-java,
.task-panel,
.task-net {
  margin-right: 4px;
}

.java-tile {
  position: relative;
  display: flex;
  align-items: center;
  justify-content: center;
  width: 32px;
  height: 32px;
  background: #52307a;
  overflow: hidden;
}

.java-gear {
  position: absolute;
  left: 1px;
  top: 1px;
}

.java-text {
  position: relative;
  font-size: 9px;
  line-height: 10px;
  text-align: center;
  color: #f58a1f;
  white-space: nowrap;
}

.cmd-tile {
  width: 30px;
  height: 26px;
  padding: 5px 0 0 3px;
  box-sizing: border-box;
  background: linear-gradient(#9aa4b0 0, #9aa4b0 2px, #000 2px);
  border: 1px solid #9aa4b0;
  font-family: 'Liberation Mono', monospace;
  font-size: 9px;
  line-height: 10px;
  color: #fff;
}

.cmd-cursor {
  margin-left: 2px;
}

.grip-tray {
  margin-left: 12px;
  flex: none;
}

.lang {
  width: 24px;
  margin-left: 10px;
  margin-top: -6px;
  font-family: 'Open Sans', sans-serif;
  font-size: 11px;
  box-sizing: border-box;
}

.tray {
  display: grid;
  grid-template-columns: repeat(15, 24px);
  justify-items: center;
  align-items: center;
}

.t-rs {
  font-weight: bold;
  font-size: 17px;
  line-height: 20px;
  letter-spacing: -1px;
  color: #b0208a;
}

.t-rs i {
  font-style: normal;
  font-size: 13px;
  color: #f0a020;
}

.t-info {
  font-family: 'Liberation Serif', serif;
  font-size: 15px;
  font-weight: bold;
  fill: #fff;
  text-anchor: middle;
}

.clock {
  width: 74px;
  margin-left: 7px;
  text-align: center;
  font-family: 'Open Sans', sans-serif;
  font-size: 11px;
  line-height: 17px;
}

.show-desktop {
  width: 14px;
  height: 38px;
  margin-left: auto;
  background: linear-gradient(rgba(255, 255, 255, .3), rgba(255, 255, 255, .1));
  border: 1px solid #a8c0e0;
  box-sizing: border-box;
}
```
